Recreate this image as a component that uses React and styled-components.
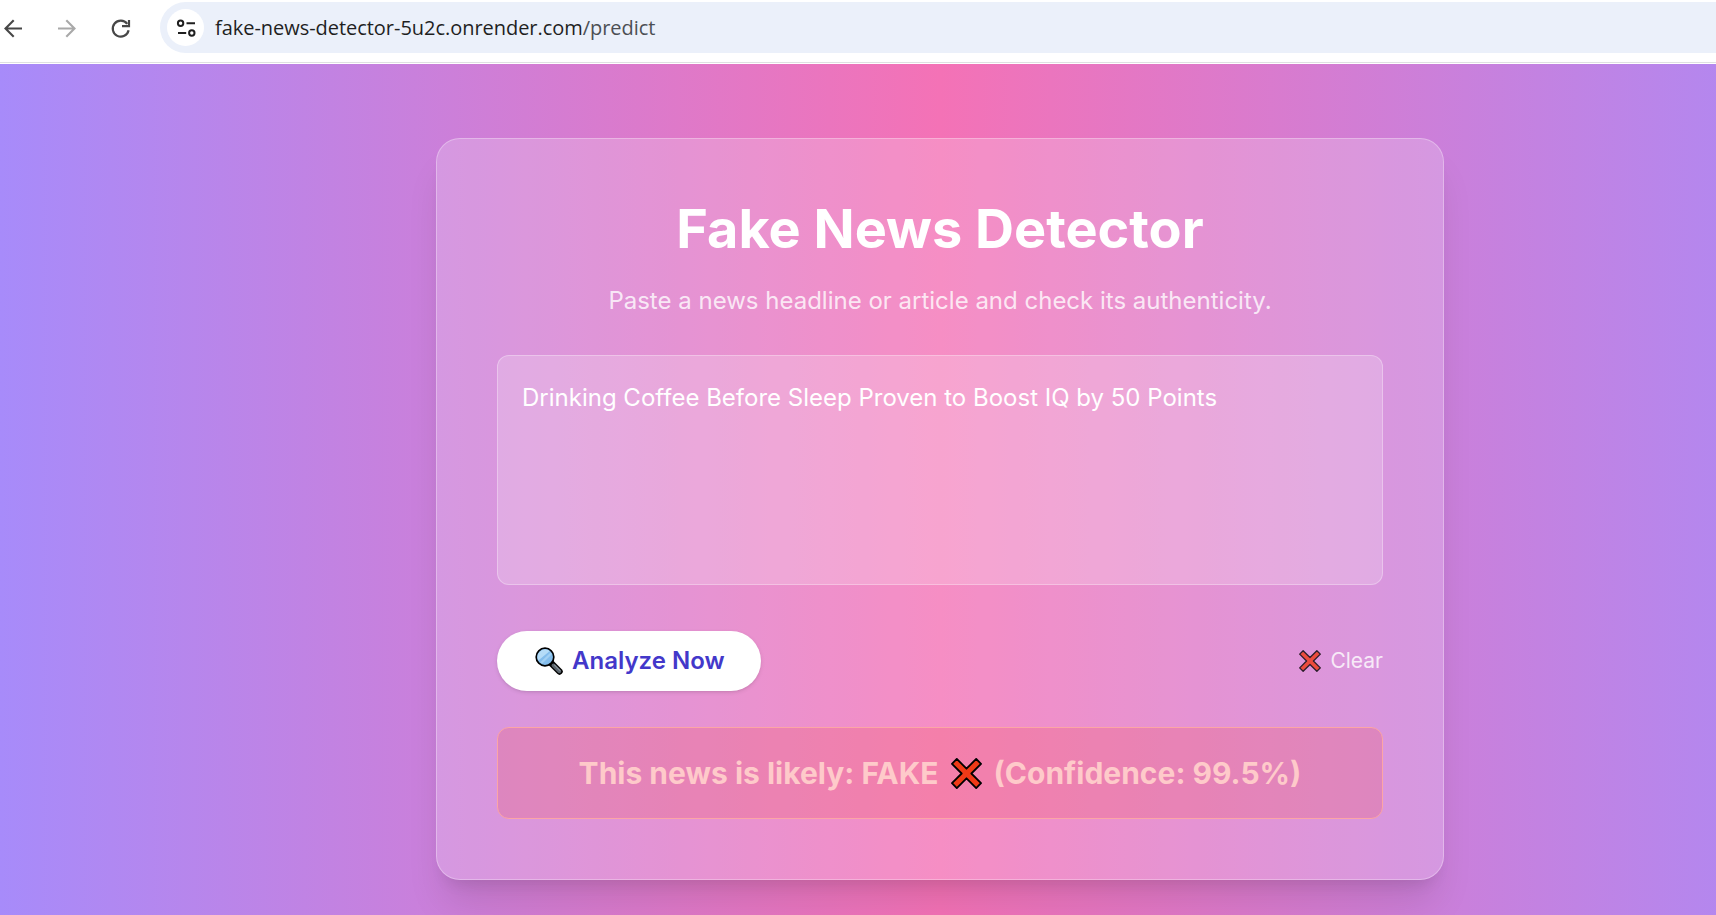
import React from "react";
import styled, { createGlobalStyle } from "styled-components";

const GlobalStyle = createGlobalStyle`
  * { box-sizing: border-box; }
  html, body { margin: 0; overflow: hidden; }
  button, textarea { font: inherit; }
`;

const Window = styled.div`
  width: 100vw;
  height: 915px;
  display: flex;
  flex-direction: column;
  overflow: hidden;
  background: #fff;
`;

const Toolbar = styled.header`
  flex: 0 0 64px;
  height: 64px;
  display: flex;
  align-items: flex-start;
  padding-top: 2px;
  background: linear-gradient(#fff 62px, #dfe0e2 62px, #dfe0e2 63px, #fff 63px);
`;

const Nav = styled.nav`
  display: flex;
  align-items: center;
  height: 51px;
  width: 160px;
  gap: 30px;
`;

const NavButton = styled.button`
  border: 0;
  padding: 0;
  width: 24px;
  height: 24px;
  background: none;
  color: ${(p) => (p.$muted ? "#a9a9a9" : "#474747")};
  svg { display: block; }
`;

const AddressBar = styled.div`
  flex: 1;
  height: 51px;
  display: flex;
  align-items: center;
  padding-left: 7px;
  background: #ebf0fa;
  border-radius: 26px 0 0 26px;
`;

const SiteInfo = styled.span`
  width: 37px;
  height: 37px;
  display: grid;
  place-items: center;
  border-radius: 50%;
  background: #fff;
  color: #1f1f1f;
`;

const Url = styled.span`
  margin-left: 11px;
  font: 400 20px/28px "Open Sans", "Noto Sans", sans-serif;
  letter-spacing: -0.04px;
  color: #1f1f1f;
  white-space: nowrap;
`;

const UrlPath = styled.span`
  color: #4c4f54;
`;

const Page = styled.main`
  flex: 0 0 auto;
  width: 1880px;
  height: 890px;
  display: flex;
  flex-direction: column;
  align-items: center;
  padding-top: 74px;
  background: linear-gradient(90deg, #a78bfa, #f472b6, #a78bfa);
  font-family: Inter, sans-serif;
`;

const Card = styled.section`
  width: 1008px;
  height: 742px;
  padding: 60px;
  border: 1px solid rgba(255, 255, 255, 0.3);
  border-radius: 24px;
  background: rgba(255, 255, 255, 0.2);
  box-shadow: 0 30px 37.5px -7.5px rgba(0, 0, 0, 0.1), 0 12px 15px -9px rgba(0, 0, 0, 0.1);
`;

const Title = styled.h1`
  margin: 0 0 24px;
  font-size: 54px;
  line-height: 60px;
  font-weight: 700;
  text-align: center;
  color: #fff;
`;

const Subtitle = styled.p`
  margin: 0 0 36px;
  font-size: 24px;
  line-height: 36px;
  text-align: center;
  color: rgba(255, 255, 255, 0.8);
`;

const NewsInput = styled.textarea`
  display: block;
  width: 100%;
  height: 230px;
  padding: 24px;
  border: 1px solid rgba(255, 255, 255, 0.3);
  border-radius: 12px;
  background: rgba(255, 255, 255, 0.2);
  color: #fff;
  font-size: 24px;
  line-height: 36px;
  resize: none;
  outline: none;
`;

const Actions = styled.div`
  display: flex;
  justify-content: space-between;
  align-items: center;
  margin: 46px 0 36px;
`;

const AnalyzeButton = styled.button`
  display: flex;
  align-items: center;
  gap: 9px;
  width: 264px;
  height: 60px;
  padding: 0 0 0 38px;
  border: 0;
  border-radius: 30px;
  background: #fff;
  color: #4338ca;
  font-size: 24px;
  line-height: 36px;
  font-weight: 600;
  white-space: nowrap;
  box-shadow: 0 1.5px 4.5px rgba(0, 0, 0, 0.1), 0 1.5px 3px -1.5px rgba(0, 0, 0, 0.1);
`;

const ClearButton = styled.button`
  display: flex;
  align-items: center;
  gap: 9px;
  padding: 0;
  border: 0;
  background: none;
  font-size: 21px;
  line-height: 30px;
  color: #fff;
  opacity: 0.8;
`;

const Result = styled.div`
  height: 92px;
  display: flex;
  align-items: center;
  justify-content: center;
  border: 1px solid #fca5a5;
  border-radius: 12px;
  background: rgba(239, 68, 68, 0.2);
  color: #fecaca;
  font-size: 30px;
  line-height: 42px;
  font-weight: 700;
  white-space: nowrap;
`;

const ResultCross = styled.span`
  display: inline-flex;
  margin: 1px 12px 0;
`;

const CrossIcon = styled.svg`
  display: block;
`;

const Cross = ({ size }) => (
  <CrossIcon width={size} height={size} viewBox="0 0 32 32">
    <path
      d="M6 1 16 11 26 1 31 6 21 16 31 26 26 31 16 21 6 31 1 26 11 16 1 6Z"
      fill="#f03a17"
      stroke="#000"
      strokeWidth="1.9"
      strokeLinejoin="round"
    />
  </CrossIcon>
);

const Magnifier = () => (
  <svg width="28" height="28" viewBox="0 0 28 28">
    <path d="M16.5 16.5 24.5 24.5" stroke="#000" strokeWidth="6.4" strokeLinecap="round" />
    <path d="M18.4 18.4 24.4 24.4" stroke="#59636b" strokeWidth="3.7" strokeLinecap="round" />
    <path d="M19.6 18.2 25 23.6" stroke="#87939b" strokeWidth="1.2" strokeLinecap="round" />
    <circle cx="10" cy="10" r="8.8" fill="#83bdec" stroke="#000" strokeWidth="1.7" />
    <path d="M3.3 13.4A7.6 7.6 0 0 1 14.8 4.1Z" fill="#b5dcf7" />
    <path d="m5.2 15.2 10.7-9.9 1 1.9-9.6 9.3Z" fill="#a2d0f3" />
  </svg>
);

export default function App() {
  return (
    <Window>
      <GlobalStyle />
      <Toolbar>
        <Nav>
          <NavButton aria-label="Back">
            <svg width="24" height="24" fill="none" stroke="currentColor" strokeWidth="2.1">
              <path d="M22 12.5H5.5M13.7 4.3 5.5 12.5l8.2 8.2" />
            </svg>
          </NavButton>
          <NavButton aria-label="Forward" $muted>
            <svg width="24" height="24" fill="none" stroke="currentColor" strokeWidth="2.1">
              <path d="M4 12.5h16.5M12.3 4.3l8.2 8.2-8.2 8.2" />
            </svg>
          </NavButton>
          <NavButton aria-label="Reload">
            <svg width="24" height="24" fill="none" stroke="currentColor" strokeWidth="2.2">
              <path d="M20.6 14.3A8 8 0 1 1 19.2 7.9M21 4v6.2h-7" />
            </svg>
          </NavButton>
        </Nav>
        <AddressBar>
          <SiteInfo>
            <svg width="20" height="20" fill="none" stroke="currentColor" strokeWidth="2">
              <circle cx="4.6" cy="5.2" r="2.7" />
              <path d="M10.5 5.2H19M2 15h8.2" />
              <circle cx="15.8" cy="15" r="2.7" />
            </svg>
          </SiteInfo>
          <Url>
            fake-news-detector-5u2c.onrender.com<UrlPath>/predict</UrlPath>
          </Url>
        </AddressBar>
      </Toolbar>
      <Page>
        <Card>
          <Title>Fake News Detector</Title>
          <Subtitle>Paste a news headline or article and check its authenticity.</Subtitle>
          <NewsInput defaultValue="Drinking Coffee Before Sleep Proven to Boost IQ by 50 Points" spellCheck={false} />
          <Actions>
            <AnalyzeButton>
              <Magnifier />
              Analyze Now
            </AnalyzeButton>
            <ClearButton>
              <Cross size={22} />
              Clear
            </ClearButton>
          </Actions>
          <Result>
            This news is likely: FAKE
            <ResultCross>
              <Cross size={31} />
            </ResultCross>
            (Confidence: 99.5%)
          </Result>
        </Card>
      </Page>
    </Window>
  );
}
